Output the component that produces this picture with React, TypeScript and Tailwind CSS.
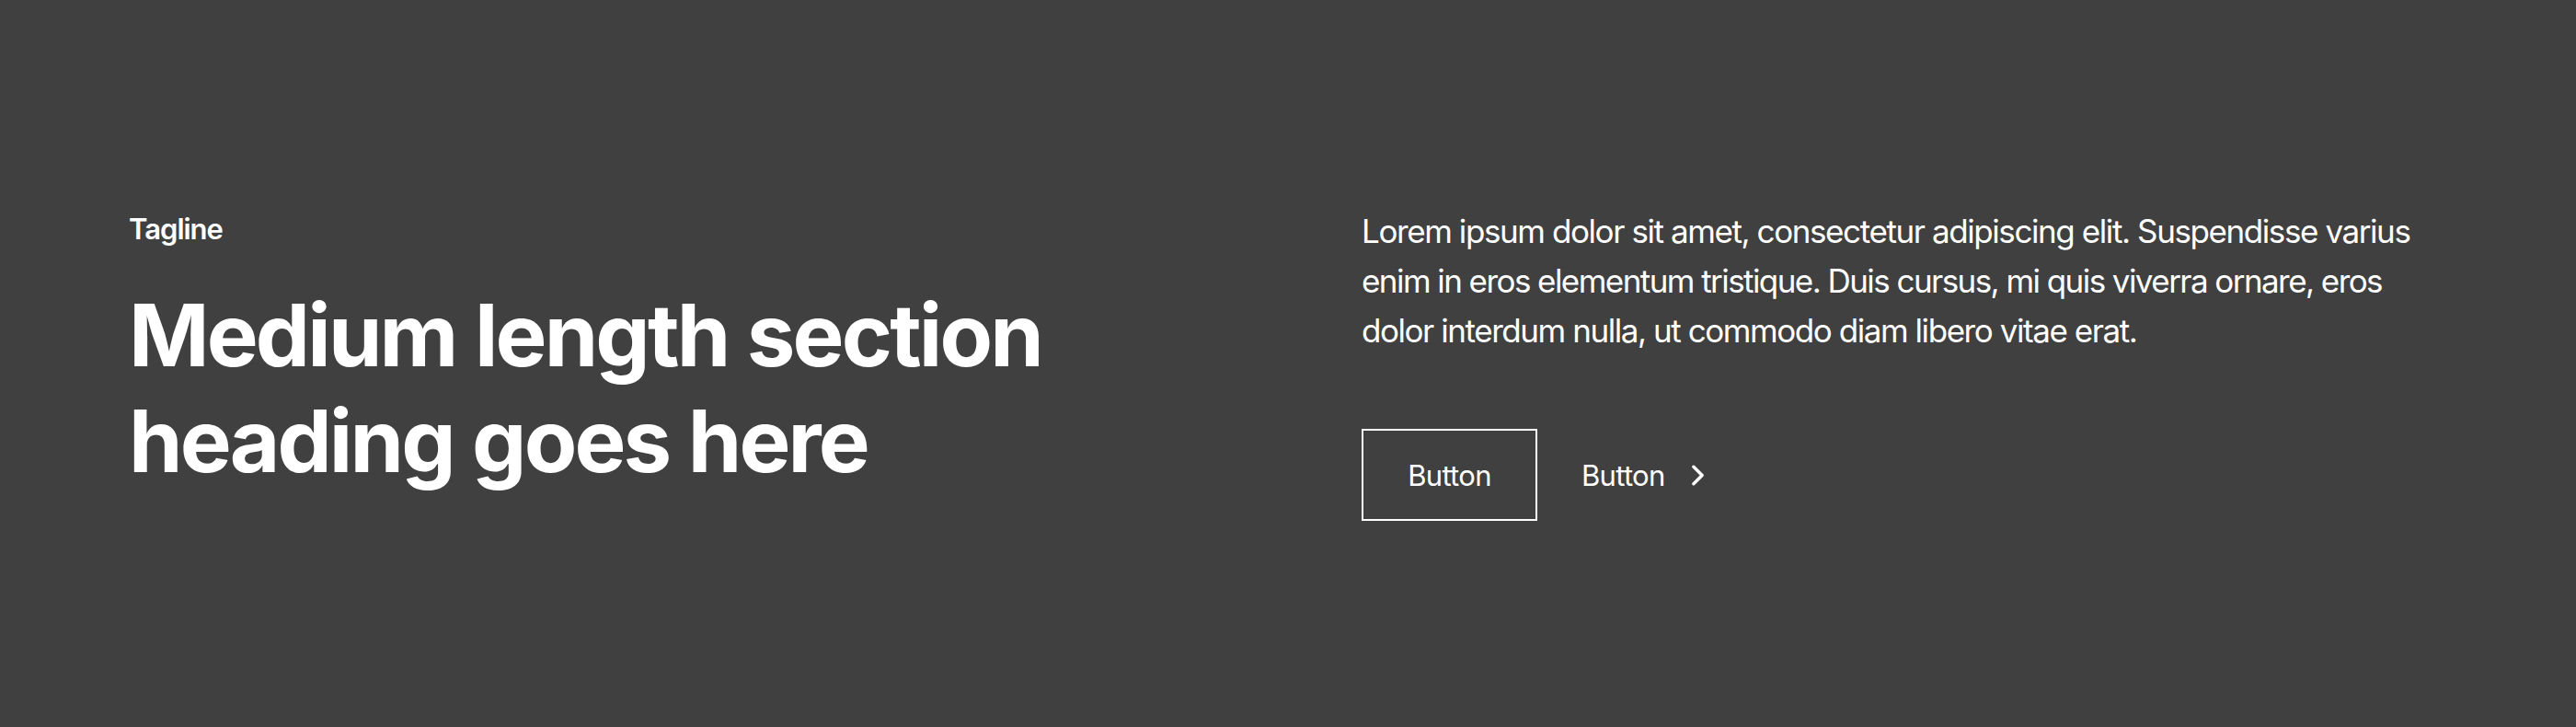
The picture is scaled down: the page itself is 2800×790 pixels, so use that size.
import React from "react";
import { ChevronRight } from "lucide-react";

export default function App() {
  return (
    <section className="h-[790px] w-full bg-[#404040] px-[140px] pt-[224px] font-['Inter',sans-serif] text-white">
      <div className="grid grid-cols-2 gap-x-[160px]">
        <div className="pt-px">
          <p className="text-[31px] font-semibold leading-[48px] tracking-[-1px]">Tagline</p>
          <h2 className="mt-[34px] text-[94px] font-bold leading-[115px] tracking-[-2.85px] [word-spacing:1px]">
            Medium length section
            <br />
            heading goes here
          </h2>
        </div>

        <div>
          <p className="whitespace-nowrap text-[35px] leading-[54px] tracking-[-1.44px]">
            <span className="tracking-[-1.41px]">
              Lorem ipsum dolor sit amet, consectetur adipiscing elit. Suspendisse varius
            </span>
            <br />
            <span className="tracking-[-1.56px]">
              enim in eros elementum tristique. Duis cursus, mi quis viverra ornare, eros
            </span>
            <br />
            dolor interdum nulla, ut commodo diam libero vitae erat.
          </p>
          <div className="mt-20 flex items-center gap-12">
            <button className="h-[100px] w-[191px] border-2 border-white pt-0.5 text-[31px] leading-[48px] tracking-[-0.7px]">
              Button
            </button>
            <button className="flex items-center gap-[17px] text-[31px] leading-[48px] tracking-[-0.7px]">
              <span className="pt-0.5">Button</span>
              <ChevronRight className="h-[37px] w-[37px]" strokeWidth={2.2} />
            </button>
          </div>
        </div>
      </div>
    </section>
  );
}
